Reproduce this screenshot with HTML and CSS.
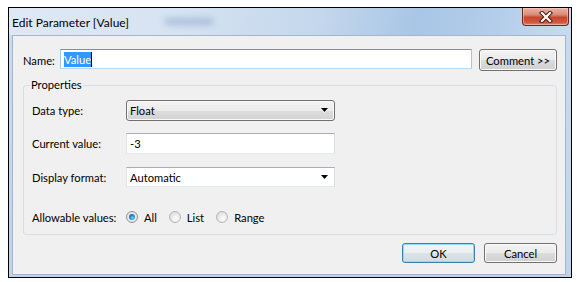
FILE: index.html
```html
<!DOCTYPE html>
<html>
<head>
<meta charset="utf-8">
<link rel="stylesheet" href="styles.css">
</head>
<body>
<div class="window">
  <div class="titlebar">
    <div class="title">Edit Parameter [Value]</div>
    <div class="smudge"></div>
    <div class="close">
      <svg width="14" height="12" viewBox="0 0 14 12">
        <path d="M3 2 L11 10 M11 2 L3 10" stroke="#4a1a12" stroke-width="4.2" stroke-linecap="square" fill="none"/>
        <path d="M3 2 L11 10 M11 2 L3 10" stroke="#ffffff" stroke-width="2.2" stroke-linecap="square" fill="none"/>
      </svg>
    </div>
  </div>
  <div class="client">
    <div class="name-row">
      <span class="name-label">Name:</span>
      <div class="field field-focus"><span class="sel">Value</span><span class="caret"></span></div>
      <div class="btn btn-comment">Comment &gt;&gt;</div>
    </div>
    <fieldset class="group">
      <legend class="legend">Properties</legend>
      <div class="prop-row row-first">
        <span class="prop-label">Data type:</span>
        <div class="combo combo-list">
          <span>Float</span>
          <svg class="arrow" width="7" height="5" viewBox="0 0 7 5"><path d="M0 0 H7 L3.5 4 Z" fill="#000"/></svg>
        </div>
      </div>
      <div class="prop-row row-second">
        <span class="prop-label">Current value:</span>
        <div class="field field-plain field-prop">-3</div>
      </div>
      <div class="prop-row row-third">
        <span class="prop-label">Display format:</span>
        <div class="combo combo-edit">
          <span>Automatic</span>
          <svg class="arrow" width="7" height="5" viewBox="0 0 7 5"><path d="M0 0 H7 L3.5 4 Z" fill="#000"/></svg>
        </div>
      </div>
      <div class="prop-row row-radio">
        <span class="prop-label">Allowable values:</span>
        <span class="radio radio-on"></span><span class="radio-text">All</span>
        <span class="radio"></span><span class="radio-text">List</span>
        <span class="radio"></span><span class="radio-text">Range</span>
      </div>
    </fieldset>
    <div class="button-row">
      <div class="btn btn-default">OK</div>
      <div class="btn btn-cancel">Cancel</div>
    </div>
  </div>
</div>
</body>
</html>
```

FILE: styles.css
```css
html, body {
  margin: 0;
  background: #ffffff;
}
body {
  font-family: Lato, "Noto Sans", sans-serif;
  font-size: 11.2px;
  color: #000;
}
.window {
  margin: 7px 0 0 8px;
  width: 562px;
  height: 269px;
  border: 1px solid #000;
  background: linear-gradient(180deg, #c9dbef 0%, #bfd4ec 100%);
  display: flex;
  flex-direction: column;
}
.titlebar {
  height: 27px;
  flex: none;
  display: flex;
  align-items: flex-start;
  padding-left: 3px;
  background: linear-gradient(105deg, #dfe9f5 0%, #d6e3f2 30%, #c4d7ec 55%, #a9c6e6 72%, #b3cdea 86%, #c8dbef 100%);
}
.title {
  margin-top: 7px;
  line-height: 15px;
  font-size: 12px;
}
.smudge {
  margin: 10px 0 0 36px;
  width: 48px;
  height: 7px;
  background: rgba(120, 150, 190, 0.45);
  filter: blur(3px);
}
.close {
  margin-left: auto;
  margin-right: 2px;
  width: 45px;
  height: 17px;
  border: 1px solid #6b2a20;
  border-top: none;
  border-radius: 0 0 4px 4px;
  background: linear-gradient(180deg, #eab3a6 0%, #d88a77 40%, #c5462e 55%, #cf5a3f 85%, #e08a6c 100%);
  box-shadow: inset 0 0 0 1px rgba(255, 220, 210, 0.45);
  display: flex;
  align-items: center;
  justify-content: center;
}
.client {
  flex: 1;
  margin: 0 5px 2px 3px;
  border: 1px solid #a3b6cc;
  background: #f0f0f0;
  padding: 13px 8px 0 10px;
  display: flex;
  flex-direction: column;
}
.name-row {
  display: flex;
  align-items: center;
  height: 22px;
}
.name-label {
  width: 37px;
  flex: none;
}
.field {
  box-sizing: border-box;
  height: 20px;
  background: #fff;
  border: 1px solid;
  border-color: #abadb3 #dbdfe6 #e3e9ef #e2e3ea;
  padding: 0 3px;
  display: flex;
  align-items: center;
}
.field-focus {
  flex: 1;
  margin-top: -2px;
  border-color: #5f97c9 #a4c9e3 #b7d9ed #a4c9e3;
}
.sel {
  background: #3399ff;
  color: #fff;
  line-height: 15px;
}
.caret {
  width: 1px;
  height: 15px;
  background: #000;
}
.btn {
  box-sizing: border-box;
  border: 1px solid #707070;
  border-radius: 3px;
  background: linear-gradient(180deg, #f2f2f2 0%, #ebebeb 50%, #dddddd 51%, #cfcfcf 100%);
  box-shadow: inset 0 0 0 1px #fbfbfb;
  display: flex;
  align-items: center;
  justify-content: center;
}
.btn-comment {
  width: 78px;
  height: 22px;
  margin-left: 7px;
}
.group {
  margin: 6px 0 0 0;
  padding: 0 0 10px 8px;
  border: 1px solid #d5dfe5;
  border-radius: 3px;
  min-width: 0;
}
.legend {
  padding: 0 1px;
  margin-left: -2px;
  line-height: 16px;
}
.prop-row {
  display: flex;
  align-items: center;
}
.prop-label {
  width: 94px;
  flex: none;
}
.row-first { margin-top: 7px; }
.row-second { margin-top: 12px; }
.row-third { margin-top: 13px; }
.row-radio { margin-top: 23px; height: 14px; }
.combo {
  box-sizing: border-box;
  width: 209px;
  height: 21px;
  display: flex;
  align-items: center;
  justify-content: space-between;
  padding: 0 6px 0 3px;
}
.combo-list {
  border: 1px solid #707070;
  border-radius: 3px;
  background: linear-gradient(180deg, #f3f3f3 0%, #ebebeb 50%, #dddddd 51%, #d3d3d3 100%);
  box-shadow: inset 0 0 0 1px #fafafa;
}
.combo-edit {
  height: 20px;
  background: #fff;
  border: 1px solid;
  border-color: #abadb3 #dbdfe6 #e3e9ef #e2e3ea;
}
.arrow {
  filter: drop-shadow(0 1px 0 #ffffff);
}
.field-prop {
  width: 209px;
  height: 21px;
}
.radio {
  box-sizing: border-box;
  width: 12px;
  height: 12px;
  border-radius: 50%;
  border: 1px solid #b7b7b7;
  background: radial-gradient(circle at 60% 65%, #ffffff 0%, #e6e6e6 55%, #d4d4d4 100%);
  display: inline-flex;
  align-items: center;
  justify-content: center;
}
.radio-on {
  border-color: #8e8f8f;
  background: #eaeaea;
}
.radio-on::after {
  content: "";
  width: 6px;
  height: 6px;
  border-radius: 50%;
  background: radial-gradient(circle at 60% 65%, #7fd0f8 0%, #2a8ad4 45%, #0b4b86 100%);
}
.radio-text {
  margin-left: 6px;
  margin-right: 12px;
}
.button-row {
  display: flex;
  justify-content: flex-end;
  margin-top: 8px;
}
.btn-default,
.btn-cancel {
  width: 73px;
  height: 20px;
}
.btn-default {
  border-color: #3c7fb1;
  box-shadow: inset 0 0 0 1px #8fdcf9;
  background: linear-gradient(180deg, #f2f4f6 0%, #eaeef1 50%, #dde3e8 51%, #d3dbe1 100%);
}
.btn-cancel {
  margin-left: 9px;
}
```
